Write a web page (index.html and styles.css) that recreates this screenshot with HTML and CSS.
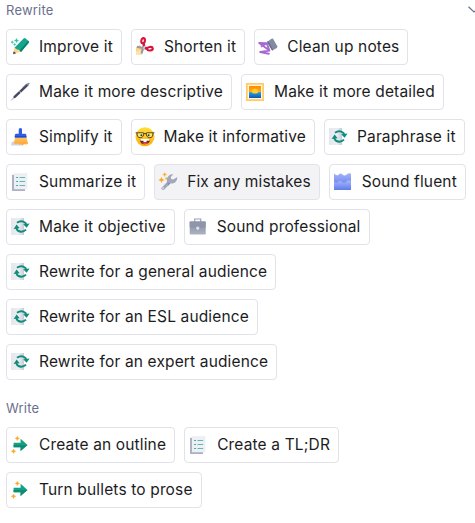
FILE: index.html
```
<!DOCTYPE html>
<html lang="en">
<head>
<meta charset="utf-8">
<title>Writing actions</title>
<link rel="stylesheet" href="styles.css">
</head>
<body>
<svg class="sprite" aria-hidden="true">
  <defs>
    <linearGradient id="g-paper"><stop offset="0" stop-color="#e4e7ec"/><stop offset=".6" stop-color="#eceef2"/><stop offset="1" stop-color="#c7cbd7"/></linearGradient>
    <linearGradient id="g-sky" x2="0" y2="1"><stop offset="0" stop-color="#ff8b00"/><stop offset="1" stop-color="#ffb31a"/></linearGradient>
    <linearGradient id="g-sea" x2="0" y2="1"><stop offset="0" stop-color="#35a5e8"/><stop offset="1" stop-color="#0759b5"/></linearGradient>
    <linearGradient id="g-face" x2="0" y2="1"><stop offset="0" stop-color="#ffdf38"/><stop offset="1" stop-color="#ffad0c"/></linearGradient>
    <linearGradient id="g-gray" x2="0" y2="1"><stop offset="0" stop-color="#858da4"/><stop offset="1" stop-color="#adb2c2"/></linearGradient>
    <linearGradient id="g-water" x2="0" y2="1"><stop offset="0" stop-color="#a9b8fa"/><stop offset="1" stop-color="#5f7bec"/></linearGradient>
    <linearGradient id="g-wave" x2="0" y2="1"><stop offset="0" stop-color="#a3b3fa"/><stop offset="1" stop-color="#5570e6"/></linearGradient>
    <linearGradient id="g-brush" x2="0" y2="1"><stop offset="0" stop-color="#ffc75f"/><stop offset="1" stop-color="#ff9f2e"/></linearGradient>
  </defs>
  <symbol id="pencil" viewBox="0 0 18 18">
    <path d="M3.6 9.5 2.1 16l7.9-2.6z" fill="#ffd18b"/>
    <path d="M2.8 13.2 2 16.2l3.1-1z" fill="#3d455c"/>
    <path d="M3.5 9.7 12.6.4q1-.8 2 0l3.2 2.8q.8.8 0 1.7L10 13.9 8.3 12l-2-.5z" fill="#15a68c"/>
    <path d="m8.5 12.4 8.8-9.6.8.9-8.1 10.2z" fill="#08806e"/>
    <path d="m5.5.4.7 1.5 1.5.6-1.5.7-.7 1.5-.7-1.5-1.5-.7 1.5-.6zM1.3 2.8l.5 1 .9.4-.9.4-.5 1-.5-1-.9-.4.9-.4zM3.7 5.3l.4.8.8.4-.8.4-.4.8-.4-.8-.8-.4.8-.4z" fill="#2fc2aa" stroke="#2fc2aa" stroke-width=".4"/>
  </symbol>
  <symbol id="scissors" viewBox="0 0 18 18">
    <path d="M0 9 4 7l4 5-2 4.5H0z" fill="#ffd184"/>
    <path d="M0 13.5 5 12l1 4.5H0z" fill="#ffe2ad"/>
    <path d="M8 6 5.5 15.5M11 11 1 8.7" stroke="#9299ab" stroke-width="2"/>
    <path d="m7.7 8.3 1.4.3-.3 2.6-2-.5z" fill="#c8ccd5"/>
    <ellipse cx="7.1" cy="2.7" rx="1.8" ry="2.6" transform="rotate(10 7.1 2.7)" fill="#fff" stroke="#d8153e" stroke-width="2.1"/>
    <path d="m7.3 5.2 1 2.8M11.3 10.5l-2.2-.8" stroke="#d8153e" stroke-width="2.4"/>
    <ellipse cx="14" cy="10.7" rx="2.8" ry="1.8" transform="rotate(-8 14 10.7)" fill="#fff" stroke="#d8153e" stroke-width="2.1"/>
  </symbol>
  <symbol id="eraser" viewBox="0 0 18 18">
    <path d="m8 4 4.5-3.3 1.4-.3L18.4 8.6l-.5 1.3-4.8 2.6z" fill="#828b9f"/>
    <path d="m8 4 1.2-.9 5 8.8-1.1.6z" fill="#646e86"/>
    <path d="M.2 5 7.8 5.2 2.6 8.3M.2 5l9.9 7.3M7.8 5.2l2.6 7.4L1.2 14l8.6 1.8" fill="none" stroke="#a66ad2" stroke-width="1.9" stroke-linejoin="round" stroke-linecap="round"/>
  </symbol>
  <symbol id="pen" viewBox="0 0 18 18">
    <path d="m-.8 18.2 3.8-4.7 1.2 1z" fill="#a4abba"/>
    <path d="M3.7 13.8 16.4 1.8" stroke="#444b60" stroke-width="2.5" stroke-linecap="round"/>
    <path d="m15.8 2.2 2.5-2" stroke="#7f879b" stroke-width="1.4"/>
    <path d="m8.6 8.3 1.8 1.9" stroke="#d5d8e0" stroke-width="1"/>
    <path d="m11.2 4.9 4-3.9" stroke="#8b93a6" stroke-width=".7"/>
  </symbol>
  <symbol id="picture" viewBox="0 0 18 18">
    <path d="M0 0h18v18H0z" fill="#ffca67"/>
    <path d="M1.7 1.7h14.6v14.6H1.7z" fill="#fff5df"/>
    <path d="M3 3h12v7H3z" fill="url(#g-sky)"/>
    <circle cx="9" cy="9" r="3.2" fill="#ffce2d"/>
    <path d="M3 8.7q3 .2 4 1.5 2 .8 4 0 1-1.3 4-1.5V15H3z" fill="url(#g-sea)"/>
  </symbol>
  <symbol id="brush" viewBox="0 0 18 18">
    <path d="M.2 17.4q-.4-4 3.3-4.4l3-2 5 6.4z" fill="#d0d3dc"/>
    <path d="M4 9.5h11.5l1.7 6.8-1.5-.8-.5 1.3-2.2-.8-1.2 1.4-2-1.4-1.2.7-1.6-1.5-2 .8-2-.4z" fill="url(#g-brush)"/>
    <path d="M7.7 1.5Q7.8 0 9.5 0T11 1.5v4.3h3.2q1.2.3 1.2 1.7v2H3.8v-2q0-1.5 1.3-1.7h2.6z" fill="#315ce3"/>
    <path d="M3.8 8h11.6v1.5H3.8z" fill="#244ac6"/>
  </symbol>
  <symbol id="nerd" viewBox="0 0 18 18">
    <circle cx="9" cy="8.8" r="9.5" fill="url(#g-face)"/>
    <path d="M3.8 11h10.4q-.2 5-5.2 5.3T3.8 11z" fill="#5e271c"/>
    <path d="M4.2 11h9.6l-.3 1.7h-9z" fill="#fff"/>
    <path d="M7.5 12h3v2h-3z" fill="#fff"/>
    <path d="M5.5 14.8q3.5-1.3 7 0-3 2.8-7 0z" fill="#ef4664"/>
    <path d="M-.4 4.8h7.5l1 .7h1.8l1-.7h7.5M1 5q-.2 4.7 3.3 4.7Q7.7 9.6 7.9 5M17 5q.2 4.7-3.3 4.7-3.4-.1-3.6-4.7" fill="none" stroke="#3c3425" stroke-width=".9"/>
    <path d="M1.8 5.4h5.4Q7 9 4.5 9T1.8 5.4zM10.8 5.4h5.4Q16 9 13.5 9t-2.7-3.6z" fill="#fff2a0" opacity=".65"/>
    <circle cx="5.4" cy="7.2" r="1" fill="#3c3425"/><circle cx="12.6" cy="7.2" r="1" fill="#3c3425"/>
  </symbol>
  <symbol id="cycle" viewBox="0 0 18 18">
    <path d="M0 0h13v17H0z" fill="url(#g-paper)"/>
    <path d="M6 4.8Q10.4 1.6 14.4 4.9l.8 1.8M15 11.6Q11 15.4 6.5 12.4L5.2 10" fill="none" stroke="#0e8c7c" stroke-width="2"/>
    <path d="m12.2 6.3 6.4-.9-3 4.4zM2.6 10.9l3-4.4 3.1 3.7z" fill="#0e8c7c"/>
  </symbol>
  <symbol id="list" viewBox="0 0 18 18">
    <path d="M1 1.7h3v14h10V18H1z" fill="#adb1c4"/>
    <path d="M3 .2h13.4v16H3z" fill="#eceff3"/>
    <path d="M5.3 4.5h1.5M5.3 8.5h1.5M5.3 12.5h1.5" stroke="#179581" stroke-width="1.2"/>
    <path d="M8.5 4.5h5.6M8.5 8.5h5.6M8.5 12.5h5.6" stroke="#62b8ac" stroke-width="1"/>
  </symbol>
  <symbol id="wrench" viewBox="0 0 18 18">
    <path d="M2.4 15 8.1 9.1Q6.9 5.4 9.7 2.7q2-1.7 4.6-1.4L11.8 4l.3 2.1 2.2.5L18.3 4q.2 3.7-2 5.2-2.2 1.7-4.9 1l-5.8 6q-1.5 1.2-2.8.1-1.1-1-.4-1.3z" fill="#a2a8bb"/>
    <path d="m8.5 9.5 3 .7-2.5 2.6" fill="#868ea5"/>
    <circle cx="4.1" cy="15.1" r=".8" fill="#f0f1f4"/>
    <path d="m5.7-.5.6 1.4 1.4.6-1.4.6-.6 1.4-.6-1.4-1.4-.6 1.4-.6zM2.4 4.2l.8 1.9 1.9.8-1.9.8-.8 1.9-.8-1.9-1.9-.8 1.9-.8zM7.2 4.2l.4.8.8.4-.8.4-.4.8-.4-.8-.8-.4.8-.4z" fill="#fda51b" stroke="#fda51b" stroke-width=".3"/>
  </symbol>
  <symbol id="water" viewBox="0 0 18 18">
    <path d="M0 .3q2 2.7 4.3 1.7Q6.5-.5 8.5 1.5t4.2 0Q15-.5 17 .8V17H0z" fill="url(#g-wave)"/>
    <path d="M0 8.5q2.5 2.5 4.5 0 2-1.2 4 .7 2 1.5 4-.7 2-2.5 4.5 0V17H0z" fill="url(#g-water)"/>
  </symbol>
  <symbol id="briefcase" viewBox="0 0 18 18">
    <path d="M5.7 4V1h6v3" fill="none" stroke="#9ba1b5" stroke-width="1.2"/>
    <rect x=".7" y="3.4" width="16" height="13.2" rx=".8" fill="url(#g-gray)"/>
    <path d="M.7 4q0-.6.7-.6H16q.7 0 .7.6v5.2q-8 2.3-16 0z" fill="#8f96ac"/>
    <path d="M7.3 8.7h2.9v2.1l-1.4 1.5-1.5-1.5z" fill="#dfe1e8"/>
  </symbol>
  <symbol id="arrow" viewBox="0 0 18 18">
    <path d="M2.6 6.7h7V2.8L16.5 9l-6.9 6.1v-3.8h-7z" fill="#13a083"/>
    <path d="M2.6 9h13.9l-6.9 6.1v-3.8h-7z" fill="#108c75"/>
    <path d="m6.3.2.7 1.5 1.5.7-1.5.7-.7 1.5-.7-1.5-1.5-.7 1.5-.7zM2.5 13.1l.7 1.5 1.5.7-1.5.7-.7 1.5-.7-1.5-1.5-.7 1.5-.7z" fill="#ffa51f" stroke="#ffa51f" stroke-width=".4"/>
  </symbol>
</svg>
<main class="panel">
  <svg class="chevron" viewBox="0 0 12 7"><path d="m.5.7 5.5 5.3L11.5.7"/></svg>
  <section class="group">
    <h2 class="heading">Rewrite</h2>
    <div class="actions">
      <button class="action"><svg class="icon"><use href="#pencil"/></svg>Improve it</button>
      <button class="action"><svg class="icon"><use href="#scissors"/></svg>Shorten it</button>
      <button class="action"><svg class="icon"><use href="#eraser"/></svg>Clean up notes</button>
      <button class="action"><svg class="icon"><use href="#pen"/></svg>Make it more descriptive</button>
      <button class="action"><svg class="icon"><use href="#picture"/></svg>Make it more detailed</button>
      <button class="action"><svg class="icon"><use href="#brush"/></svg>Simplify it</button>
      <button class="action"><svg class="icon"><use href="#nerd"/></svg>Make it informative</button>
      <button class="action"><svg class="icon"><use href="#cycle"/></svg>Paraphrase it</button>
      <button class="action"><svg class="icon"><use href="#list"/></svg>Summarize it</button>
      <button class="action active"><svg class="icon"><use href="#wrench"/></svg>Fix any mistakes</button>
      <button class="action"><svg class="icon"><use href="#water"/></svg>Sound fluent</button>
      <button class="action"><svg class="icon"><use href="#cycle"/></svg>Make it objective</button>
      <button class="action"><svg class="icon"><use href="#briefcase"/></svg>Sound professional</button>
      <button class="action"><svg class="icon"><use href="#cycle"/></svg>Rewrite for a general audience</button>
      <button class="action"><svg class="icon"><use href="#cycle"/></svg>Rewrite for an ESL audience</button>
      <button class="action"><svg class="icon"><use href="#cycle"/></svg>Rewrite for an expert audience</button>
    </div>
  </section>
  <section class="group">
    <h2 class="heading">Write</h2>
    <div class="actions">
      <button class="action"><svg class="icon"><use href="#arrow"/></svg>Create an outline</button>
      <button class="action"><svg class="icon"><use href="#list"/></svg>Create a TL;DR</button>
      <button class="action"><svg class="icon"><use href="#arrow"/></svg>Turn bullets to prose</button>
    </div>
  </section>
</main>
</body>
</html>
```
FILE: styles.css
```
* { box-sizing: border-box; }
body { margin: 0; background: #fff; font-family: Inter, sans-serif; }
.sprite { position: absolute; width: 0; height: 0; }
.panel {
  position: relative;
  height: 523px;
  padding: 0 4px 0 6px;
  overflow: hidden;
}
.chevron {
  position: absolute;
  top: 6px;
  left: 468px;
  width: 12px;
  height: 7px;
  fill: none;
  stroke: #6b7190;
  stroke-width: 1.2;
}
.group + .group { margin-top: 18px; }
.heading {
  margin: 0;
  height: 29px;
  padding-top: 2px;
  font-size: 13px;
  line-height: 16px;
  font-weight: 400;
  letter-spacing: 0.2px;
  color: #6b6f8d;
}
.actions { display: flex; flex-wrap: wrap; gap: 9px; }
.action {
  display: flex;
  align-items: center;
  gap: 10px;
  height: 36px;
  padding: 0 8px 0 4px;
  border: 1px solid #e1e2ea;
  border-radius: 4px;
  background: #fff;
  color: #1c1c1e;
  font: 400 15.5px/20px Inter, sans-serif;
  letter-spacing: 0.15px;
  white-space: nowrap;
}
.action.active { background: #f3f3f6; }
.icon { flex: none; width: 18px; height: 18px; overflow: visible; }
symbol { overflow: visible; }
```
